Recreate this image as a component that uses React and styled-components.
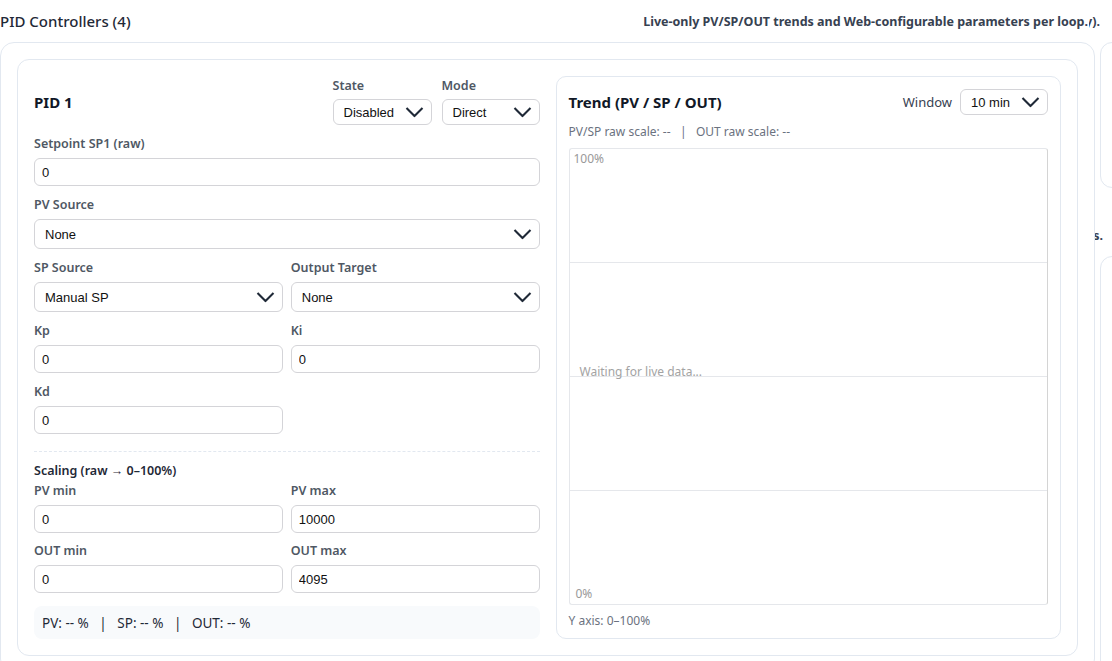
import React from 'react';
import styled, { createGlobalStyle } from 'styled-components';

const GlobalStyle = createGlobalStyle`
  html, body {
    margin: 0;
    padding: 0;
    background: #fff;
    font-family: "Noto Sans", "Open Sans", sans-serif;
  }
  * { box-sizing: border-box; }
`;

const Page = styled.div`
  display: flex;
  width: 100vw;
  height: 100vh;
  overflow: hidden;
`;

const Section = styled.section`
  flex: 0 0 1095px;
  display: flex;
  flex-direction: column;
`;

const SectionHeader = styled.div`
  display: flex;
  flex-shrink: 0;
  align-items: center;
  justify-content: space-between;
  height: 42px;
  padding-right: 7px;
`;

const SectionTitle = styled.h2`
  margin: 0;
  font-size: 15px;
  font-weight: 500;
  color: #1f2937;
`;

const SectionHint = styled.span`
  font-size: 12.5px;
  font-weight: 700;
  color: #374151;
`;

const OuterCard = styled.div`
  flex-shrink: 0;
  border: 1px solid #e2e8f0;
  border-radius: 14px;
  padding: 16px;
  background: #fff;
`;

const LoopCard = styled.div`
  display: grid;
  grid-template-columns: 1fr 1fr;
  gap: 16px;
  border: 1px solid #e2e8f0;
  border-radius: 12px;
  padding: 16px;
  background: #fff;
`;

const ConfigColumn = styled.div`
  display: flex;
  flex-direction: column;
  gap: 11px;
`;

const LoopHeader = styled.div`
  display: flex;
  align-items: center;
  justify-content: space-between;
  padding-top: 2px;
`;

const LoopTitle = styled.h3`
  margin: 0;
  font-size: 15px;
  font-weight: 700;
  color: #111827;
`;

const HeaderControls = styled.div`
  display: flex;
  gap: 10px;
`;

const Field = styled.div`
  display: flex;
  flex-direction: column;
  gap: ${p => p.$gap || 6}px;
  width: ${p => p.$width || 'auto'};
`;

const Label = styled.label`
  font-size: 12.5px;
  line-height: 16px;
  font-weight: 600;
  color: #4f5864;
`;

const TwoCol = styled.div`
  display: grid;
  grid-template-columns: 1fr 1fr;
  column-gap: 8px;
  row-gap: 10px;
`;

const TextInput = styled.input`
  width: 100%;
  height: 28px;
  border: 1px solid #d4d4d8;
  border-radius: 6px;
  padding: 0 7px;
  font-family: "Liberation Sans", Arial, sans-serif;
  font-size: 13px;
  color: #111;
  background: #fff;
  outline: none;
`;

const SelectWrap = styled.div`
  position: relative;
  width: 100%;
`;

const NativeSelect = styled.select`
  appearance: none;
  -webkit-appearance: none;
  width: 100%;
  height: ${p => p.$h || 30}px;
  border: 1px solid #d4d4d8;
  border-radius: 6px;
  padding: 0 30px 0 10px;
  font-family: "Liberation Sans", Arial, sans-serif;
  font-size: 13px;
  color: #111;
  background: #fff;
  outline: none;
`;

const Chevron = styled.svg`
  position: absolute;
  right: 8px;
  top: 50%;
  transform: translateY(-50%);
  pointer-events: none;
`;

const Divider = styled.hr`
  margin: 6px 0 0;
  border: 0;
  border-top: 1px dashed #e2e8f0;
  height: 0;
`;

const SubTitle = styled.div`
  font-size: 12.5px;
  line-height: 16px;
  font-weight: 600;
  color: #1f2937;
`;

const ScalingGrid = styled(TwoCol)`
  margin-top: -2px;
`;

const Readout = styled.div`
  display: flex;
  align-items: center;
  height: 33px;
  margin-top: 2px;
  padding: 0 8px;
  background: #f8fafc;
  border-radius: 8px;
  font-size: 13.5px;
  color: #1f2937;
  white-space: pre;
`;

const TrendPanel = styled.div`
  display: flex;
  flex-direction: column;
  border: 1px solid #e2e8f0;
  border-radius: 10px;
  padding: 12px 12px 9px;
`;

const TrendHeader = styled.div`
  display: flex;
  align-items: center;
  justify-content: space-between;
`;

const WindowGroup = styled.div`
  display: flex;
  align-items: center;
  gap: 8px;
  font-size: 13px;
  color: #374151;
`;

const Meta = styled.div`
  font-size: 12px;
  line-height: 16px;
  color: #6b7280;
  white-space: pre;
  margin: ${p => p.$margin || 0};
`;

const Chart = styled.div`
  position: relative;
  flex: 1;
  display: flex;
  flex-direction: column;
  border: 1px solid #e5e7eb;
  border-right-color: #d4d4d4;
  border-radius: 3px;
`;

const GridBand = styled.div`
  flex: 1;
  & + & {
    border-top: 1px solid #e5e7eb;
  }
`;

const AxisLabel = styled.span`
  position: absolute;
  left: ${p => p.$left}px;
  ${p => (p.$bottom != null ? `bottom: ${p.$bottom}px;` : `top: ${p.$top}px;`)}
  font-size: 12px;
  color: #999;
`;

const EmptyNote = styled.span`
  position: absolute;
  left: 10px;
  top: calc(50% - 14px);
  font-size: 12px;
  color: #a3a3a3;
`;

const SideColumn = styled.div`
  flex: 1;
  min-width: 0;
  margin-left: -6px;
  overflow: hidden;
  display: flex;
  flex-direction: column;
`;

const SideHeader = styled.div`
  display: flex;
  flex-shrink: 0;
  justify-content: flex-end;
  align-items: center;
  overflow: hidden;
  width: ${p => p.$w}px;
  height: 42px;
  margin: ${p => p.$mt || 0}px 0 0 ${p => p.$ml || 0}px;
`;

const SideHint = styled.span`
  flex-shrink: 0;
  white-space: nowrap;
  font-size: 12.5px;
  font-weight: 700;
  color: #374151;
`;

const SideCard = styled.div`
  margin-left: 11px;
  width: 400px;
  height: ${p => p.$h}px;
  flex-shrink: 0;
  border: 1px solid #e2e8f0;
  border-radius: 12px;
`;

const ChevronIcon = () => (
  <Chevron width="19" height="11" viewBox="0 0 19 11">
    <path d="M1.5 1.5 L9.5 9.5 L17.5 1.5" fill="none" stroke="#1f2937" strokeWidth="2.1" />
  </Chevron>
);

const Select = ({ value, options, h }) => (
  <SelectWrap>
    <NativeSelect defaultValue={value} $h={h}>
      {options.map(o => <option key={o}>{o}</option>)}
    </NativeSelect>
    <ChevronIcon />
  </SelectWrap>
);

const InputField = ({ label, value }) => (
  <Field>
    <Label>{label}</Label>
    <TextInput defaultValue={value} />
  </Field>
);

const SelectField = ({ label, value, options }) => (
  <Field>
    <Label>{label}</Label>
    <Select value={value} options={options} />
  </Field>
);

export default function App() {
  return (
    <>
      <GlobalStyle />
      <Page>
        <Section>
          <SectionHeader>
            <SectionTitle>PID Controllers (4)</SectionTitle>
            <SectionHint>Live-only PV/SP/OUT trends and Web-configurable parameters per loop.</SectionHint>
          </SectionHeader>
          <OuterCard>
            <LoopCard>
              <ConfigColumn>
                <LoopHeader>
                  <LoopTitle>PID 1</LoopTitle>
                  <HeaderControls>
                    <Field $gap={5} $width="99px">
                      <Label>State</Label>
                      <Select h={26} value="Disabled" options={['Disabled', 'Enabled']} />
                    </Field>
                    <Field $gap={5} $width="98px">
                      <Label>Mode</Label>
                      <Select h={26} value="Direct" options={['Direct', 'Reverse']} />
                    </Field>
                  </HeaderControls>
                </LoopHeader>

                <InputField label="Setpoint SP1 (raw)" value="0" />
                <SelectField label="PV Source" value="None" options={['None']} />

                <TwoCol>
                  <SelectField label="SP Source" value="Manual SP" options={['Manual SP']} />
                  <SelectField label="Output Target" value="None" options={['None']} />
                </TwoCol>
                <TwoCol>
                  <InputField label="Kp" value="0" />
                  <InputField label="Ki" value="0" />
                </TwoCol>
                <TwoCol>
                  <InputField label="Kd" value="0" />
                </TwoCol>

                <Divider />

                <Field>
                  <SubTitle>Scaling (raw → 0–100%)</SubTitle>
                  <ScalingGrid>
                    <InputField label="PV min" value="0" />
                    <InputField label="PV max" value="10000" />
                    <InputField label="OUT min" value="0" />
                    <InputField label="OUT max" value="4095" />
                  </ScalingGrid>
                </Field>

                <Readout>{'PV: -- %   |   SP: -- %   |   OUT: -- %'}</Readout>
              </ConfigColumn>

              <TrendPanel>
                <TrendHeader>
                  <LoopTitle>Trend (PV / SP / OUT)</LoopTitle>
                  <WindowGroup>
                    Window
                    <Field $width="88px">
                      <Select h={26} value="10 min" options={['1 min', '5 min', '10 min', '30 min']} />
                    </Field>
                  </WindowGroup>
                </TrendHeader>
                <Meta $margin="9px 0 8px">{'PV/SP raw scale: --   |   OUT raw scale: --'}</Meta>
                <Chart>
                  <GridBand />
                  <GridBand />
                  <GridBand />
                  <GridBand />
                  <AxisLabel $left={4} $top={1}>100%</AxisLabel>
                  <EmptyNote>Waiting for live data...</EmptyNote>
                  <AxisLabel $left={6} $bottom={2}>0%</AxisLabel>
                </Chart>
                <Meta $margin="8px 0 0">Y axis: 0–100%</Meta>
              </TrendPanel>
            </LoopCard>
          </OuterCard>
        </Section>

        <SideColumn>
          <SideHeader $w={11}>
            <SideHint>Live trends only (no history).</SideHint>
          </SideHeader>
          <SideCard $h={146} />
          <SideHeader $w={8} $ml={6} $mt={26}>
            <SideHint>Per-channel alarm thresholds.</SideHint>
          </SideHeader>
          <SideCard $h={420} />
        </SideColumn>
      </Page>
    </>
  );
}
